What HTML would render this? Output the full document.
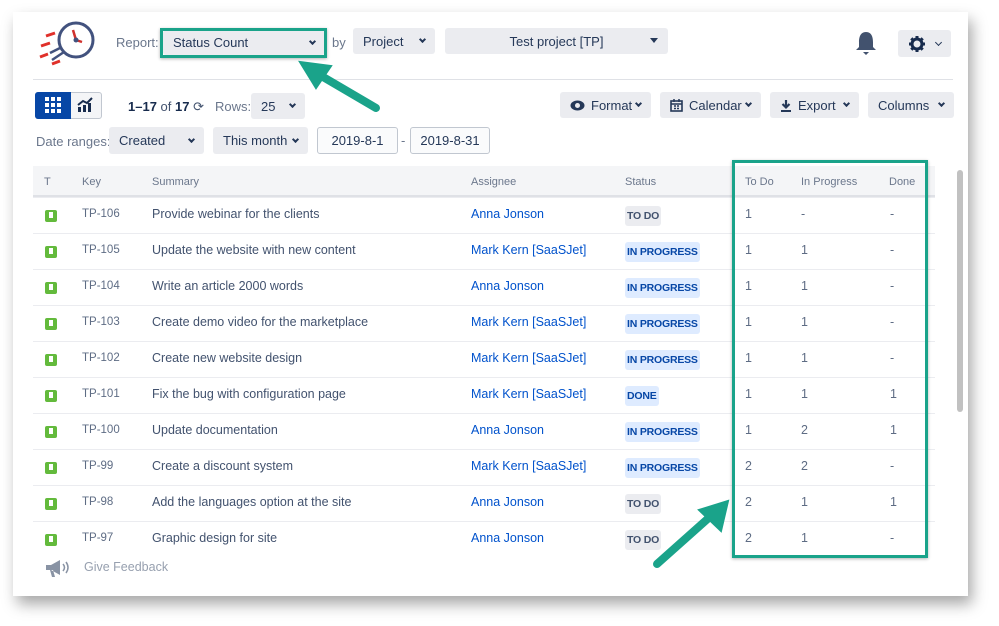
<!DOCTYPE html>
<html><head><style>
*{box-sizing:border-box;margin:0;padding:0}
body{width:999px;height:626px;background:#fff;font-family:"Liberation Sans",sans-serif;position:relative;overflow:hidden;color:#172b4d}
.card{position:absolute;left:13px;top:12px;width:955px;height:584px;background:#fff;box-shadow:4px 8px 14px rgba(0,0,0,.35)}
.a{position:absolute}
.btn{position:absolute;background:#ebecf0;border-radius:3px;font-size:13px;color:#253858;display:flex;align-items:center;padding:0 10px;white-space:nowrap}
.chev{display:inline-block;flex:none;width:5px;height:5px;border-right:2px solid #253858;border-bottom:2px solid #253858;transform:rotate(45deg);margin-left:auto;margin-top:-3px}
.hd{position:absolute;top:176px;font-size:11px;color:#6b778c}
.row{position:absolute;left:33px;width:902px;height:36px;border-top:1px solid #ebecf0;font-size:12.5px}
.row span{position:absolute;top:9px}
.ic{left:12px;top:12px!important;width:12px;height:12px;background:#63ba3c;border-radius:2px}
.ic:after{content:"";position:absolute;left:4px;top:2px;width:4px;height:6px;background:#fff}
.key{left:49px;color:#5e6c84;font-size:11.5px;top:10px!important}
.sum{left:119px;color:#42526e}
.as{left:438px;color:#0052cc}
.st{left:592px;top:8px!important;font-size:10.5px;font-weight:bold;padding:4px 2px;border-radius:3px;letter-spacing:-.2px}
.td{background:#ebecf0;color:#42526e}
.ip{background:#deebff;color:#0747a6}
.n{color:#5e6c84}
</style></head><body>
<div class="card"></div>
<svg class="a" style="left:38px;top:20px" width="62" height="46" viewBox="0 0 62 46">
<circle cx="38" cy="20" r="17" fill="none" stroke="#42527e" stroke-width="3"/>
<path d="M26 32 L14 40 M22 28 L12 33" stroke="#42527e" stroke-width="2.5" fill="none"/>
<path d="M38 20 L35 10 M38 20 L44 22" stroke="#d0312d" stroke-width="2.5"/>
<circle cx="38" cy="20" r="2.5" fill="#42527e"/>
<path d="M3 26 L12 23 M8 16 L17 13 M2 37 L10 34 M14 44 L22 41" stroke="#e0302a" stroke-width="3"/>
</svg>
<div class="a" style="left:116px;top:35px;font-size:13px;color:#6b778c">Report:</div>
<div class="btn" style="left:163px;top:30px;width:162px;height:25px">Status Count<i class="chev"></i></div>
<div class="a" style="left:160px;top:28px;width:167px;height:30px;border:3px solid #1aa38a;box-shadow:0 1px 3px rgba(0,0,0,.3)"></div>
<div class="a" style="left:332px;top:35px;font-size:13px;color:#6b778c">by</div>
<div class="btn" style="left:353px;top:28px;width:82px;height:26px">Project<i class="chev"></i></div>
<div class="btn" style="left:445px;top:28px;width:223px;height:26px;justify-content:center">Test project [TP]<span style="position:absolute;right:10px;top:10px;border:4px solid transparent;border-top:5px solid #253858"></span></div>
<svg class="a" style="left:855px;top:30px" width="22" height="26" viewBox="0 0 22 26"><path d="M11 2 C5 2 4 8 4 12 L4 17 L1 20 L21 20 L18 17 L18 12 C18 8 17 2 11 2Z M8 22 L14 22 L11 25Z" fill="#42526e"/></svg>
<div class="btn" style="left:898px;top:30px;width:53px;height:27px"><svg width="18" height="18" viewBox="0 0 18 18"><circle cx="9" cy="9" r="5" fill="none" stroke="#172b4d" stroke-width="3"/><path d="M9 1V4M9 14V17M1 9H4M14 9H17M3.3 3.3L5.4 5.4M12.6 12.6L14.7 14.7M3.3 14.7L5.4 12.6M12.6 5.4L14.7 3.3" stroke="#172b4d" stroke-width="3"/></svg><i class="chev" style="width:5px;height:5px;border-width:1.5px"></i></div>
<div class="a" style="left:33px;top:79px;width:920px;height:1px;background:#dfe1e6"></div>
<div class="a" style="left:35px;top:92px;width:67px;height:27px;border:1px solid #c1c7d0;border-radius:3px;background:#f4f5f7"></div>
<div class="a" style="left:35px;top:92px;width:36px;height:27px;background:#0747a6;border-radius:3px 0 0 3px"></div>
<svg class="a" style="left:45px;top:97px" width="17" height="17"><g fill="#fff"><rect x="0" y="0" width="4" height="4"/><rect x="6" y="0" width="4" height="4"/><rect x="12" y="0" width="4" height="4"/><rect x="0" y="6" width="4" height="4"/><rect x="6" y="6" width="4" height="4"/><rect x="12" y="6" width="4" height="4"/><rect x="0" y="12" width="4" height="4"/><rect x="6" y="12" width="4" height="4"/><rect x="12" y="12" width="4" height="4"/></g></svg>
<svg class="a" style="left:77px;top:97px" width="17" height="16"><path d="M1 15 V10 H4 V15 M6 15 V8 H9 V15 M11 15 V6 H14 V15" fill="#172b4d"/><path d="M1 8 L6 4 L10 6 L15 1" stroke="#172b4d" stroke-width="2" fill="none"/></svg>
<div class="a" style="left:128px;top:99px;font-size:13px;color:#42526e"><b style="color:#172b4d">1–17</b> of <b style="color:#172b4d">17</b> ⟳</div>
<div class="a" style="left:215px;top:99px;font-size:13px;color:#6b778c">Rows:</div>
<div class="btn" style="left:251px;top:93px;width:54px;height:26px">25<i class="chev"></i></div>
<div class="btn" style="left:560px;top:92px;width:91px;height:26px"><svg width="15" height="11" viewBox="0 0 15 11" style="margin-right:6px"><ellipse cx="7.5" cy="5.5" rx="7" ry="5" fill="#253858"/><circle cx="7.5" cy="5.5" r="2.5" fill="#ebecf0"/></svg>Format<i class="chev"></i></div>
<div class="btn" style="left:660px;top:92px;width:101px;height:26px"><svg width="13" height="13" viewBox="0 0 13 13" style="margin-right:6px"><rect x="1" y="2" width="11" height="10" fill="none" stroke="#253858" stroke-width="1.6"/><path d="M1 5H12M4 0V3M9 0V3M4 7H6M7 7H9M4 9.5H6M7 9.5H9" stroke="#253858" stroke-width="1.5"/></svg>Calendar<i class="chev"></i></div>
<div class="btn" style="left:770px;top:92px;width:89px;height:26px"><svg width="12" height="13" viewBox="0 0 12 13" style="margin-right:6px"><path d="M6 1V8M2.5 5L6 8.5L9.5 5" stroke="#253858" stroke-width="2.2" fill="none"/><path d="M1 12H11" stroke="#253858" stroke-width="2"/></svg>Export<i class="chev"></i></div>
<div class="btn" style="left:868px;top:92px;width:86px;height:26px">Columns<i class="chev"></i></div>
<div class="a" style="left:36px;top:134px;font-size:13px;color:#6b778c">Date ranges:</div>
<div class="btn" style="left:109px;top:127px;width:95px;height:27px">Created<i class="chev"></i></div>
<div class="btn" style="left:213px;top:127px;width:95px;height:27px">This month<i class="chev"></i></div>
<div class="btn" style="left:317px;top:127px;width:81px;height:27px;background:#fafbfc;border:1px solid #c1c7d0;justify-content:center;padding:0">2019-8-1</div>
<div class="a" style="left:401px;top:133px;font-size:13px;color:#6b778c">-</div>
<div class="btn" style="left:410px;top:127px;width:80px;height:27px;background:#fafbfc;border:1px solid #c1c7d0;justify-content:center;padding:0">2019-8-31</div>
<div class="a" style="left:33px;top:166px;width:902px;height:31px;background:#f4f5f7;border-bottom:2px solid #dfe1e6"></div>
<div class="hd" style="left:44px">T</div><div class="hd" style="left:82px">Key</div><div class="hd" style="left:152px">Summary</div><div class="hd" style="left:471px">Assignee</div><div class="hd" style="left:625px">Status</div><div class="hd" style="left:745px">To Do</div><div class="hd" style="left:801px">In Progress</div><div class="hd" style="left:889px">Done</div>
<div class="row" style="top:197px"><span class="ic"></span><span class="key">TP-106</span><span class="sum">Provide webinar for the clients</span><span class="as">Anna Jonson</span><span class="st td">TO DO</span><span class="n" style="left:712px">1</span><span class="n" style="left:768px">-</span><span class="n" style="left:857px">-</span></div>
<div class="row" style="top:233px"><span class="ic"></span><span class="key">TP-105</span><span class="sum">Update the website with new content</span><span class="as">Mark Kern [SaaSJet]</span><span class="st ip">IN PROGRESS</span><span class="n" style="left:712px">1</span><span class="n" style="left:768px">1</span><span class="n" style="left:857px">-</span></div>
<div class="row" style="top:269px"><span class="ic"></span><span class="key">TP-104</span><span class="sum">Write an article 2000 words</span><span class="as">Anna Jonson</span><span class="st ip">IN PROGRESS</span><span class="n" style="left:712px">1</span><span class="n" style="left:768px">1</span><span class="n" style="left:857px">-</span></div>
<div class="row" style="top:305px"><span class="ic"></span><span class="key">TP-103</span><span class="sum">Create demo video for the marketplace</span><span class="as">Mark Kern [SaaSJet]</span><span class="st ip">IN PROGRESS</span><span class="n" style="left:712px">1</span><span class="n" style="left:768px">1</span><span class="n" style="left:857px">-</span></div>
<div class="row" style="top:341px"><span class="ic"></span><span class="key">TP-102</span><span class="sum">Create new website design</span><span class="as">Mark Kern [SaaSJet]</span><span class="st ip">IN PROGRESS</span><span class="n" style="left:712px">1</span><span class="n" style="left:768px">1</span><span class="n" style="left:857px">-</span></div>
<div class="row" style="top:377px"><span class="ic"></span><span class="key">TP-101</span><span class="sum">Fix the bug with configuration page</span><span class="as">Mark Kern [SaaSJet]</span><span class="st ip">DONE</span><span class="n" style="left:712px">1</span><span class="n" style="left:768px">1</span><span class="n" style="left:857px">1</span></div>
<div class="row" style="top:413px"><span class="ic"></span><span class="key">TP-100</span><span class="sum">Update documentation</span><span class="as">Anna Jonson</span><span class="st ip">IN PROGRESS</span><span class="n" style="left:712px">1</span><span class="n" style="left:768px">2</span><span class="n" style="left:857px">1</span></div>
<div class="row" style="top:449px"><span class="ic"></span><span class="key">TP-99</span><span class="sum">Create a discount system</span><span class="as">Mark Kern [SaaSJet]</span><span class="st ip">IN PROGRESS</span><span class="n" style="left:712px">2</span><span class="n" style="left:768px">2</span><span class="n" style="left:857px">-</span></div>
<div class="row" style="top:485px"><span class="ic"></span><span class="key">TP-98</span><span class="sum">Add the languages option at the site</span><span class="as">Anna Jonson</span><span class="st td">TO DO</span><span class="n" style="left:712px">2</span><span class="n" style="left:768px">1</span><span class="n" style="left:857px">1</span></div>
<div class="row" style="top:521px"><span class="ic"></span><span class="key">TP-97</span><span class="sum">Graphic design for site</span><span class="as">Anna Jonson</span><span class="st td">TO DO</span><span class="n" style="left:712px">2</span><span class="n" style="left:768px">1</span><span class="n" style="left:857px">-</span></div>
<svg class="a" style="left:44px;top:558px" width="30" height="20"><path d="M2 7 H7 L16 2 V17 L7 12 H2Z M6 12 L8 19 H11 L9 12" fill="#8993a4"/><path d="M19 6 Q22 9.5 19 13 M22 4 Q26 9.5 22 15" stroke="#8993a4" stroke-width="1.5" fill="none"/></svg>
<div class="a" style="left:84px;top:560px;font-size:12.5px;color:#97a0af">Give Feedback</div>
<div class="a" style="left:957px;top:170px;width:6px;height:242px;background:#c1c1c1;border-radius:3px"></div>
<div class="a" style="left:732px;top:160px;width:196px;height:398px;border:3px solid #1aa38a;box-shadow:0 1px 3px rgba(0,0,0,.3)"></div>
<svg class="a" style="left:0;top:0" width="999" height="626">
<g fill="#1aa38a" stroke="#1aa38a" stroke-linecap="round">
<line x1="376" y1="108" x2="318" y2="74" stroke-width="8"/>
<polygon points="300,62 331,66 316,88" stroke-width="2"/>
<line x1="657" y1="564" x2="712" y2="515" stroke-width="8"/>
<polygon points="728,501 721,531 699,510" stroke-width="2"/>
</g></svg>
</body></html>
